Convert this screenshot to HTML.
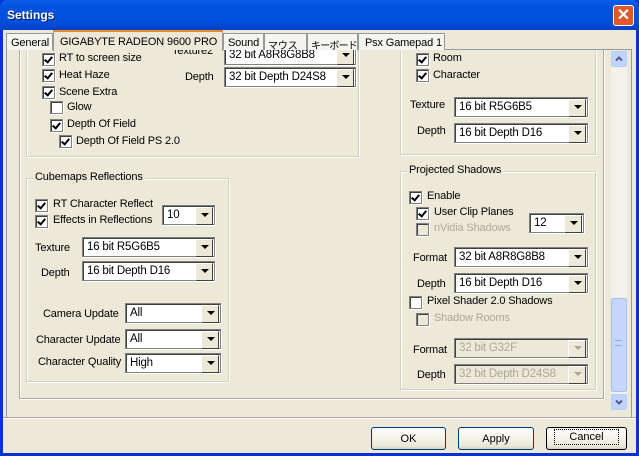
<!DOCTYPE html><html><head><meta charset="utf-8"><style>
*{box-sizing:border-box;margin:0;padding:0}
body{width:639px;height:456px;overflow:hidden;background:#0831d9;font-family:"Liberation Sans","Noto Sans CJK JP",sans-serif;font-size:11px;color:#000;position:relative}
.a{position:absolute;white-space:nowrap}
#title{left:0;top:0;width:639px;height:30px;background:linear-gradient(#0a5fe8,#0053e1 20%,#0050dc 70%,#0340c4);border-radius:7px 7px 0 0}
#win{left:3px;top:30px;width:633px;height:423px;background:#ece9d8}
.gb{position:absolute;border:1px solid #d0d0bf;box-shadow:inset 1px 1px 0 #fff,1px 1px 0 #fff}
.gl{position:absolute;background:#ece9d8;padding:0 2px;top:-8px;left:6px}
.cb{position:absolute;width:13px;height:13px;background:#fff;border:1px solid #808080;box-shadow:inset 1px 1px 0 #404040,1px 1px 0 #fff}
.cb.k::after{content:"";position:absolute;left:3px;top:1px;width:3px;height:6px;border:solid #000;border-width:0 2px 2px 0;transform:rotate(40deg)}
.cb.d{background:#ece9d8}
.cm{position:absolute;height:20px;background:#fff;border:1px solid #808080;box-shadow:inset 1px 1px 0 #404040,1px 1px 0 #fff;padding:3px 0 0 4px;font-size:11.5px;letter-spacing:-0.2px}
.cm::after{content:"";position:absolute;right:1px;top:1px;width:16px;height:16px;background:#ece9d8;border:1px solid;border-color:#fff #404040 #404040 #fff}
.cm::before{content:"";position:absolute;right:5px;top:7px;border:4px solid transparent;border-top:4px solid #000;border-bottom:0;z-index:2}
.cm.d{background:#ece9d8;color:#aca899}
.cm.d::before{border-top-color:#aca899}
.t{position:absolute;font-size:11px;letter-spacing:-0.15px;white-space:nowrap}
.dis{color:#aca899}
.btn{position:absolute;height:23px;border:1px solid #003c74;border-radius:3px;background:linear-gradient(#fff,#ece9d8 85%,#d6d0c5);text-align:center;font-size:11px;padding-top:5px}
.tab{position:absolute;border:1px solid #919b9c;border-bottom:0;background:#f5f4ee;font-size:11px;letter-spacing:-0.15px;white-space:nowrap;overflow:hidden}
</style></head><body>
<div id="title" class="a"><span style="position:absolute;left:7px;top:8px;color:#fff;font-weight:bold;font-size:12px;text-shadow:1px 1px #0a1e6e">Settings</span>
<div style="position:absolute;left:613px;top:5px;width:21px;height:21px;background:#e0592e;border:1px solid #fff;border-radius:3px;color:#fff;font-weight:bold;font-size:16px;text-align:center;line-height:19px">✕</div></div>
<div id="win" class="a"></div>
<div class="a" style="left:6px;top:49px;width:626px;height:369px;border:1px solid #919b9c;background:#f4f3ee"></div>
<div class="a" style="left:7px;top:50px;width:624px;height:367px;background:#ece9d8"></div>
<div class="tab" style="left:6px;top:33px;width:47px;height:17px;padding:3px 0 0 4px">General</div>
<div class="tab" style="left:53px;top:30px;width:170px;height:21px;border-top:2px solid #e68b2c;background:#ece9d8;padding:4px 0 0 6px">GIGABYTE RADEON 9600 PRO</div>
<div class="tab" style="left:223px;top:33px;width:41px;height:17px;padding:3px 0 0 4px">Sound</div>
<div class="tab" style="left:264px;top:33px;width:43px;height:17px;padding:3px 0 0 3px;font-size:10px">マウス</div>
<div class="tab" style="left:307px;top:33px;width:51px;height:17px;padding:3px 0 0 3px;font-size:10px;letter-spacing:-0.8px">キーボード</div>
<div class="tab" style="left:358px;top:33px;width:87px;height:17px;padding:3px 0 0 6px">Psx Gamepad 1</div>
<div class="a" style="left:19px;top:40px;width:585px;height:359px;border:1px solid #aca899;border-top:0;box-shadow:1px 1px 0 #fff,inset 1px 0 0 #fff;clip-path:inset(10px -2px -2px -2px)"></div>
<div class="a" style="left:611px;top:51px;width:16px;height:359px;background:#f3f1ec"></div>
<div class="a" style="left:611px;top:51px;width:16px;height:16px;background:#c1d3fb;border:1px solid #b8cef8;border-radius:2px"><svg width="14" height="14" style="position:absolute;left:0;top:0"><path d="M4 8.5L7 5.5L10 8.5" stroke="#4d6185" stroke-width="2" fill="none"/></svg></div>
<div class="a" style="left:611px;top:298px;width:16px;height:94px;background:#c6d6fb;border:1px solid #a8c0f0;border-radius:2px"></div>
<div class="a" style="left:615px;top:340px;width:7px;height:6px;border-top:1px solid #8ea8e0;border-bottom:1px solid #8ea8e0"></div>
<div class="a" style="left:611px;top:394px;width:16px;height:16px;background:#c1d3fb;border:1px solid #b8cef8;border-radius:2px"><svg width="14" height="14" style="position:absolute;left:0;top:0"><path d="M4 5.5L7 8.5L10 5.5" stroke="#4d6185" stroke-width="2" fill="none"/></svg></div>
<div class="gb" style="left:26px;top:30px;width:333px;height:127px;clip-path:inset(20px -2px -2px -2px)"></div>
<div class="cb k" style="left:42px;top:53px"></div><div class="t" style="left:59px;top:52px">RT to screen size</div>
<div class="cb k" style="left:42px;top:69px"></div><div class="t" style="left:59px;top:69px">Heat Haze</div>
<div class="cb k" style="left:42px;top:86px"></div><div class="t" style="left:59px;top:86px">Scene Extra</div>
<div class="cb" style="left:50px;top:101px"></div><div class="t" style="left:67px;top:101px">Glow</div>
<div class="cb k" style="left:50px;top:119px"></div><div class="t" style="left:67px;top:118px">Depth Of Field</div>
<div class="cb k" style="left:59px;top:135px"></div><div class="t" style="left:76px;top:135px">Depth Of Field PS 2.0</div>
<div class="a" style="left:0;top:50px;width:639px;height:350px;overflow:hidden">
<div class="t" style="left:172px;top:-5px">Texture2</div>
<div class="cm" style="left:224px;top:-5px;width:132px">32 bit A8R8G8B8</div></div>
<div class="t" style="left:185px;top:71px">Depth</div>
<div class="cm" style="left:224px;top:67px;width:132px">32 bit Depth D24S8</div>
<div class="gb" style="left:400px;top:30px;width:196px;height:125px;clip-path:inset(20px -2px -2px -2px)"></div>
<div class="cb k" style="left:416px;top:53px"></div><div class="t" style="left:433px;top:52px">Room</div>
<div class="cb k" style="left:416px;top:69px"></div><div class="t" style="left:433px;top:69px">Character</div>
<div class="t" style="left:410px;top:99px">Texture</div>
<div class="cm" style="left:454px;top:97px;width:134px">16 bit R5G6B5</div>
<div class="t" style="left:417px;top:125px">Depth</div>
<div class="cm" style="left:454px;top:123px;width:134px">16 bit Depth D16</div>
<div class="gb" style="left:26px;top:178px;width:203px;height:204px"><span class="gl" style="letter-spacing:-0.15px">Cubemaps Reflections</span></div>
<div class="cb k" style="left:35px;top:199px"></div><div class="t" style="left:53px;top:198px">RT Character Reflect</div>
<div class="cb k" style="left:35px;top:215px"></div><div class="t" style="left:53px;top:214px">Effects in Reflections</div>
<div class="cm" style="left:162px;top:205px;width:53px">10</div>
<div class="t" style="left:35px;top:242px">Texture</div>
<div class="cm" style="left:82px;top:237px;width:133px">16 bit R5G6B5</div>
<div class="t" style="left:41px;top:267px">Depth</div>
<div class="cm" style="left:82px;top:261px;width:133px">16 bit Depth D16</div>
<div class="t" style="left:43px;top:308px">Camera Update</div>
<div class="cm" style="left:125px;top:303px;width:96px">All</div>
<div class="t" style="left:36px;top:334px">Character Update</div>
<div class="cm" style="left:125px;top:329px;width:96px">All</div>
<div class="t" style="left:38px;top:356px">Character Quality</div>
<div class="cm" style="left:125px;top:353px;width:96px">High</div>
<div class="gb" style="left:400px;top:171px;width:196px;height:219px"><span class="gl" style="letter-spacing:-0.15px">Projected Shadows</span></div>
<div class="cb k" style="left:409px;top:191px"></div><div class="t" style="left:427px;top:190px">Enable</div>
<div class="cb k" style="left:416px;top:207px"></div><div class="t" style="left:434px;top:206px">User Clip Planes</div>
<div class="cb d" style="left:416px;top:223px"></div><div class="t dis" style="left:434px;top:222px">nVidia Shadows</div>
<div class="cm" style="left:529px;top:213px;width:55px">12</div>
<div class="t" style="left:413px;top:252px">Format</div>
<div class="cm" style="left:454px;top:247px;width:134px">32 bit A8R8G8B8</div>
<div class="t" style="left:417px;top:278px">Depth</div>
<div class="cm" style="left:454px;top:273px;width:134px">16 bit Depth D16</div>
<div class="cb" style="left:409px;top:296px"></div><div class="t" style="left:427px;top:295px">Pixel Shader 2.0 Shadows</div>
<div class="cb d" style="left:416px;top:313px"></div><div class="t dis" style="left:434px;top:312px">Shadow Rooms</div>
<div class="t" style="left:413px;top:344px">Format</div>
<div class="cm d" style="left:454px;top:338px;width:134px">32 bit G32F</div>
<div class="t" style="left:417px;top:369px">Depth</div>
<div class="cm d" style="left:454px;top:364px;width:134px">32 bit Depth D24S8</div>
<div class="a" style="left:3px;top:417px;width:633px;height:2px;border-top:1px solid #aca899;border-bottom:1px solid #fff"></div>
<div class="btn" style="left:371px;top:427px;width:75px">OK</div>
<div class="btn" style="left:458px;top:427px;width:76px">Apply</div>
<div class="btn" style="left:546px;top:427px;width:81px;border-color:#000;padding-top:3px"><span style="border:1px dotted #000;padding:1px 14px">Cancel</span></div>
</body></html>
